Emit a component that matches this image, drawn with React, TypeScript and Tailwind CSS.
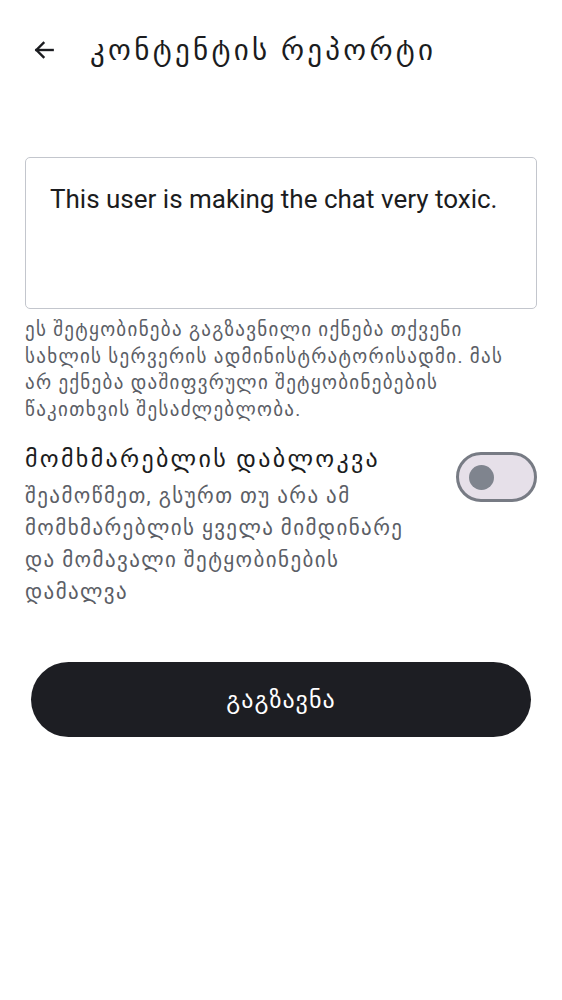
import { useState } from 'react';

export default function App() {
  const [blocked, setBlocked] = useState(false);

  return (
    <div className="w-[562px] min-h-[1000px] bg-white font-['Roboto','DejaVu_Sans',sans-serif]">
      <header className="flex items-center h-[100px] px-[30px] gap-[32px]">
        <button className="w-[28px] h-[28px] flex items-center justify-center text-[#1b1c20]">
          <svg width="26" height="26" viewBox="0 0 24 24" fill="none" stroke="currentColor" strokeWidth="2.2" strokeLinecap="square">
            <path d="M20 12H5" />
            <path d="M11.5 5.5L5 12l6.5 6.5" />
          </svg>
        </button>
        <h1 className="text-[29px] tracking-[3.3px] text-[#1b1c20] leading-none">კონტენტის რეპორტი</h1>
      </header>

      <main className="px-[25px] pt-[57px]">
        <div className="h-[152px] border border-[#c3c6cd] rounded-[5px] px-[24px] pt-[25px]">
          <p className="text-[26px] text-[#1b1c20] leading-[32px]">This user is making the chat very toxic.</p>
        </div>
        <p className="mt-[8px] text-[19px] tracking-[1.3px] leading-[26.5px] text-[#5b5e66] pr-[20px]">
          ეს შეტყობინება გაგზავნილი იქნება თქვენი სახლის სერვერის ადმინისტრატორისადმი. მას არ ექნება დაშიფვრული შეტყობინებების წაკითხვის შესაძლებლობა.
        </p>

        <div className="mt-[20px] flex items-start justify-between gap-[24px]">
          <div className="flex-1">
            <p className="text-[24px] tracking-[2.3px] leading-[32px] text-[#1b1c20]">მომხმარებლის დაბლოკვა</p>
            <p className="mt-[5px] text-[21px] tracking-[1.4px] leading-[32px] text-[#5b5e66]">
              შეამოწმეთ, გსურთ თუ არა ამ მომხმარებლის ყველა მიმდინარე და მომავალი შეტყობინების დამალვა
            </p>
          </div>
          <button
            onClick={() => setBlocked(!blocked)}
            className="mt-[9px] w-[81px] h-[50px] shrink-0 rounded-full border-[3px] border-[#777b84] bg-[#e6e0e9] flex items-center px-[10px]"
          >
            <span className="w-[25px] h-[25px] rounded-full bg-[#7f848e]" />
          </button>
        </div>

        <div className="px-[6px] mt-[54px]">
          <button className="w-full h-[75px] rounded-full bg-[#1d1e23] text-white text-[24px] tracking-[1px]">გაგზავნა</button>
        </div>
      </main>
    </div>
  );
}
